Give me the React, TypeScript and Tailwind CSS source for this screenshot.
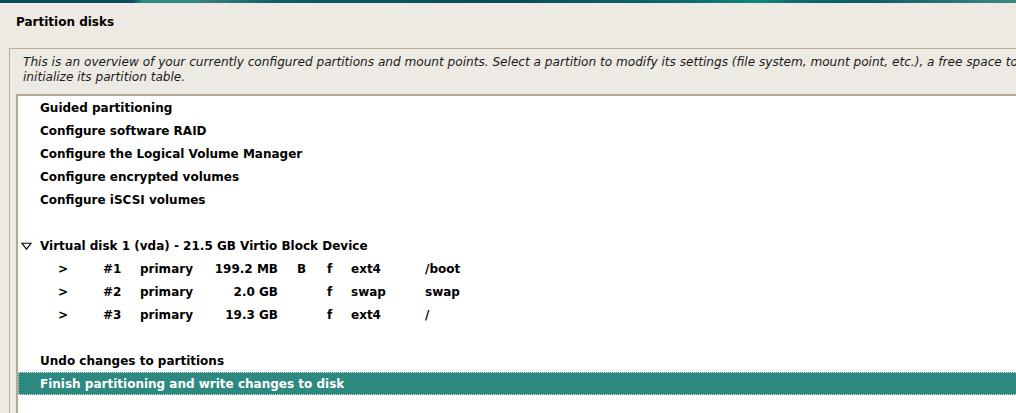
export default function App() {
  const actions = [
    'Guided partitioning',
    'Configure software RAID',
    'Configure the Logical Volume Manager',
    'Configure encrypted volumes',
    'Configure iSCSI volumes',
  ];

  const partitions = [
    { num: '#1', type: 'primary', size: '199.2 MB', boot: 'B', fmt: 'f', fs: 'ext4', mount: '/boot' },
    { num: '#2', type: 'primary', size: '2.0 GB', boot: '', fmt: 'f', fs: 'swap', mount: 'swap' },
    { num: '#3', type: 'primary', size: '19.3 GB', boot: '', fmt: 'f', fs: 'ext4', mount: '/' },
  ];

  return (
    <div className="h-[413px] w-[1016px] overflow-hidden bg-[#edeae4] font-['DejaVu_Sans',sans-serif] text-[12px] text-black">
      {/* top bar */}
      <div className="h-[3px] bg-[linear-gradient(90deg,#0b4a5f_0%,#0b4a5f_13%,#2e8a80_14%,#2e8a80_19%,#3a8078_20%,#0d5a68_28%,#0b4a5f_50%,#0d6a70_68%,#118a7a_75%,#0f6a70_78%,#0d5a68_85%,#3a8a80_100%)]" />

      <div className="h-[45px] pl-4 pt-[12px] font-bold leading-[15px]">Partition disks</div>

      <div className="ml-[9px] mr-[-20px] h-[400px] border-l border-t border-[#bcae9c] pt-[6px]">
        <div className="whitespace-nowrap pl-[13px] text-[12.1px] italic leading-[15px] text-[#1a1a1a]">
          <div>
            This is an overview of your currently configured partitions and mount points. Select a partition to modify its settings (file system, mount point, etc.), a free space to
          </div>
          <div>initialize its partition table.</div>
        </div>

        <div className="ml-[6px] mt-[9px] h-[400px] border-l-2 border-t-2 border-[#b4a898] bg-white font-bold">
          {actions.map((a) => (
            <div key={a} className="flex h-[23px] items-center pl-[22px]">
              {a}
            </div>
          ))}
          <div className="h-[23px]" />
          <div className="flex h-[23px] items-center">
            <svg width="11" height="8" viewBox="0 0 11 8" className="ml-[3px] mr-[8px]">
              <path d="M0.8 1.2 H10.2 L5.5 7.2 Z" fill="none" stroke="#000" strokeWidth="1.1" />
            </svg>
            Virtual disk 1 (vda) - 21.5 GB Virtio Block Device
          </div>
          {partitions.map((p) => (
            <div key={p.num} className="flex h-[23px] items-center">
              <span className="ml-[40px] w-[45px]">&gt;</span>
              <span className="w-[37px]">{p.num}</span>
              <span className="w-[61px]">{p.type}</span>
              <span className="w-[77px] text-right">{p.size}</span>
              <span className="ml-[19px] w-[30px]">{p.boot}</span>
              <span className="w-[24px]">{p.fmt}</span>
              <span className="w-[74px]">{p.fs}</span>
              <span>{p.mount}</span>
            </div>
          ))}
          <div className="h-[23px]" />
          <div className="flex h-[23px] items-center pl-[22px]">Undo changes to partitions</div>
          <div className="flex h-[23px] items-center border border-dotted border-[#cfe6e2] bg-[#2e8a80] pl-[21px] text-white">
            Finish partitioning and write changes to disk
          </div>
        </div>
      </div>
    </div>
  );
}
